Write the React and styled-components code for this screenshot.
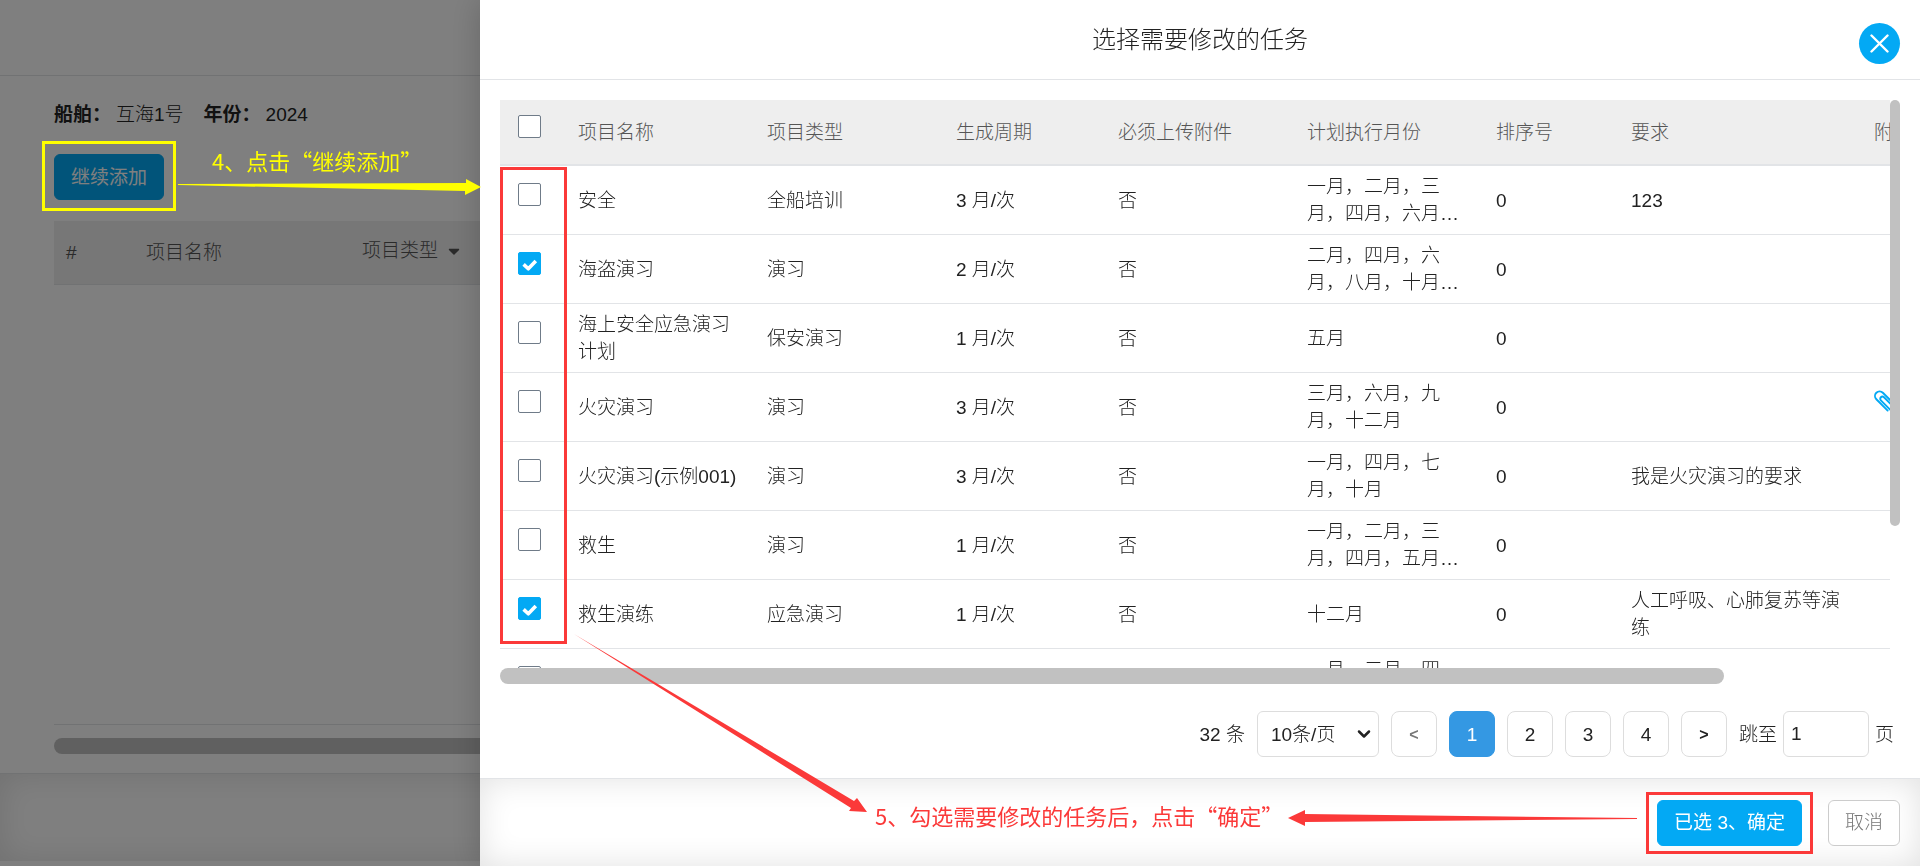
import React, { useState } from 'react';
import styled, { createGlobalStyle, ThemeProvider } from 'styled-components';
import { FaCaretDown } from 'react-icons/fa';
import { ChevronDown } from 'lucide-react';

const theme = {
    colors: {
        primary: '#03a9f4',
        active: '#3498e3',
        text: '#222',
        muted: '#555',
        line: '#e2e4e7',
        head: '#eee',
        bar: '#c1c1c1',
        red: '#fb3939',
        yellow: '#ff0',
    },
};

const GlobalStyle = createGlobalStyle`
    * {
        box-sizing: border-box;
    }
    body {
        margin: 0;
        overflow: hidden;
        background: #fff;
    }
    body, button, input, select {
        font-family: "Liberation Sans", "Noto Sans CJK SC", sans-serif;
        font-size: 19px;
        font-weight: 300;
        line-height: 27px;
        color: #222;
    }
`;

const Page = styled.main`
    display: flex;
    flex-direction: column;
    height: 100vh;
    padding-bottom: 5px;
`;

const TopBar = styled.header`
    flex: none;
    height: 76px;
    border-bottom: 1px solid ${props => props.theme.colors.line};
`;

const Content = styled.section`
    display: flex;
    flex: 1;
    flex-direction: column;
    align-items: flex-start;
    padding: 25px 0 19px 54px;
`;

const Info = styled.dl`
    display: flex;
    gap: 5px;
    margin: 0 0 25px 0;
    line-height: 28px;
`;

const InfoLabel = styled.dt`
    font-weight: 700;
`;

const InfoValue = styled.dd`
    margin: 0 15px 0 0;
`;

const Button = styled.button`
    height: 46px;
    padding: 0 16px;
    border: 1px solid ${props => (props.$primary ? props.theme.colors.primary : '#ccc')};
    border-radius: 6px;
    color: ${props => (props.$primary ? '#fff' : '#777')};
    background: ${props => (props.$primary ? props.theme.colors.primary : '#fff')};
    font-weight: ${props => (props.$primary ? 400 : 300)};
    cursor: pointer;
`;

const PlanTable = styled.table`
    width: 100%;
    margin-top: 21px;
    border-collapse: separate;
    border-spacing: 0;
    table-layout: fixed;
`;

const PlanHead = styled.th`
    width: ${props => props.$width};
    height: 64px;
    padding: 0 12px;
    border-bottom: 1px solid ${props => props.theme.colors.line};
    color: ${props => props.theme.colors.muted};
    background: ${props => props.theme.colors.head};
    font-weight: 300;
    text-align: left;
`;

const SortButton = styled.button`
    display: flex;
    align-items: center;
    gap: 7px;
    padding: 0 0 4px 0;
    border: 0;
    color: inherit;
    background: none;
`;

const PlanBody = styled.div`
    flex: 1;
    width: 100%;
    margin-bottom: 13px;
    border-bottom: 1px solid ${props => props.theme.colors.line};
`;

const ScrollX = styled.div`
    flex: none;
    width: ${props => props.$size};
    height: 16px;
    border-radius: 8px;
    background: ${props => props.theme.colors.bar};
`;

const ScrollY = styled.div`
    width: 10px;
    height: ${props => props.$size};
    border-radius: 5px;
    background: ${props => props.theme.colors.bar};
`;

const Footer = styled.footer`
    display: flex;
    flex: none;
    justify-content: flex-end;
    align-items: center;
    gap: 26px;
    height: 88px;
    padding: 0 20px;
    border-top: 1px solid ${props => props.theme.colors.line};
    box-shadow: inset 0 0 32px rgba(0, 0, 0, 0.12);
`;

const Mask = styled.div`
    position: fixed;
    inset: 0;
    background: rgba(0, 0, 0, 0.5);
`;

const Drawer = styled.section`
    position: fixed;
    top: 0;
    right: 0;
    bottom: 0;
    display: flex;
    flex-direction: column;
    width: 75%;
    background: #fff;
    box-shadow: 0 0 30px rgba(0, 0, 0, 0.2);
`;

const DrawerHeader = styled.header`
    display: grid;
    flex: none;
    grid-template-columns: 1fr auto 1fr;
    align-items: center;
    height: 80px;
    padding: 0 20px;
    border-bottom: 1px solid ${props => props.theme.colors.line};
`;

const DrawerTitle = styled.h1`
    grid-column: 2;
    margin: 0;
    font-size: 24px;
    font-weight: 300;
    line-height: 36px;
`;

const CloseButton = styled.button`
    display: flex;
    justify-content: center;
    align-items: center;
    justify-self: end;
    width: 41px;
    height: 41px;
    margin-top: 8px;
    padding: 0;
    border: 0;
    border-radius: 50%;
    background: ${props => props.theme.colors.primary};
    cursor: pointer;
`;

const DrawerBody = styled.div`
    display: flex;
    flex: 1;
    flex-direction: column;
    min-height: 0;
    padding: 20px 20px 21px 20px;
`;

const TableArea = styled.div`
    display: flex;
    flex: 1;
    min-height: 0;
`;

const TableViewport = styled.div`
    flex: 1;
    min-width: 0;
    overflow: auto;
    scrollbar-width: none;
`;

const TaskTable = styled.table`
    width: 1590px;
    border-collapse: separate;
    border-spacing: 0;
    table-layout: fixed;
`;

const HeadCell = styled.th`
    width: ${props => props.$width};
    height: 66px;
    padding: ${props => (props.$check ? '0 18px 11px 18px' : '0 12px')};
    border-bottom: 2px solid ${props => props.theme.colors.line};
    color: ${props => props.theme.colors.muted};
    background: ${props => props.theme.colors.head};
    font-weight: 300;
    text-align: left;
`;

const Cell = styled.td`
    height: 69px;
    padding: ${props => (props.$check ? '0 18px 11px 18px' : '0 12px')};
    border-bottom: 1px solid ${props => props.theme.colors.line};
`;

const Clamp = styled.div`
    display: -webkit-box;
    overflow: hidden;
    -webkit-box-orient: vertical;
    -webkit-line-clamp: 2;
`;

const CheckLabel = styled.label`
    display: grid;
    width: 23px;
    height: 23px;
    > * {
        grid-area: 1 / 1;
    }
    svg {
        pointer-events: none;
    }
`;

const CheckInput = styled.input`
    width: 23px;
    height: 23px;
    margin: 0;
    border: 1px solid #6f7b88;
    border-radius: 2px;
    background: #fff;
    appearance: none;
    &:checked {
        border-color: ${props => props.theme.colors.primary};
        background: ${props => props.theme.colors.primary};
    }
`;

const AttachLink = styled.a`
    display: block;
    height: 35px;
    color: ${props => props.theme.colors.primary};
`;

const Pagination = styled.nav`
    display: flex;
    justify-content: flex-end;
    align-items: center;
    gap: 12px;
    margin-top: 27px;
    padding-right: 6px;
`;

const SelectBox = styled.div`
    display: grid;
    align-items: center;
    > * {
        grid-area: 1 / 1;
    }
    svg {
        justify-self: end;
        margin-right: 5px;
        pointer-events: none;
    }
`;

const PageSize = styled.select`
    width: 122px;
    height: 46px;
    padding: 0 28px 0 13px;
    border: 1px solid #ddd;
    border-radius: 6px;
    background: #fff;
    appearance: none;
`;

const PageButton = styled.button`
    width: 46px;
    height: 46px;
    padding: 0;
    border: 1px solid ${props => (props.$active ? props.theme.colors.active : '#ddd')};
    border-radius: 8px;
    color: ${props => (props.$active ? '#fff' : props.theme.colors.text)};
    background: ${props => (props.$active ? props.theme.colors.active : '#fff')};
    cursor: pointer;
    &:disabled {
        color: #777;
    }
`;

const StepButton = styled(PageButton)`
    font-size: 16px;
    font-weight: 700;
`;

const Jump = styled.label`
    display: flex;
    align-items: center;
    gap: 6px;
`;

const JumpInput = styled.input`
    width: 86px;
    height: 46px;
    padding: 0 7px;
    border: 1px solid #ddd;
    border-radius: 6px;
`;

// guide marks drawn over the page
const Marks = styled.div`
    position: fixed;
    inset: 0;
    pointer-events: none;
`;

const MarkBox = styled.div`
    position: absolute;
    top: ${props => props.$top}px;
    left: ${props => props.$left}px;
    width: ${props => props.$width}px;
    height: ${props => props.$height}px;
    border: 3px solid ${props => props.theme.colors[props.$color]};
`;

const MarkText = styled.p`
    position: absolute;
    top: ${props => props.$top}px;
    left: ${props => props.$left}px;
    margin: 0;
    color: ${props => props.theme.colors[props.$color]};
    font-family: "Noto Sans CJK SC", sans-serif;
    font-size: 22px;
    font-weight: 400;
    line-height: 32px;
    white-space: nowrap;
`;

const Arrows = styled.svg`
    position: absolute;
    top: 0;
    left: 0;
`;

const columns = [
    { title: '项目名称', width: '189px' },
    { title: '项目类型', width: '189px' },
    { title: '生成周期', width: '162px' },
    { title: '必须上传附件', width: '189px' },
    { title: '计划执行月份', width: '189px' },
    { title: '排序号', width: '135px' },
    { title: '要求', width: '243px' },
    { title: '附件', width: 'auto' },
];

const tasks = [
    { id: 1, name: '安全', type: '全船培训', cycle: '3 月/次', months: '一月，二月，三月，四月，六月，七月，九月', need: '123' },
    { id: 2, name: '海盗演习', type: '演习', cycle: '2 月/次', months: '二月，四月，六月，八月，十月，十二月', need: '' },
    { id: 3, name: '海上安全应急演习计划', type: '保安演习', cycle: '1 月/次', months: '五月', need: '' },
    { id: 4, name: '火灾演习', type: '演习', cycle: '3 月/次', months: '三月，六月，九月，十二月', need: '', file: true },
    { id: 5, name: '火灾演习(示例001)', type: '演习', cycle: '3 月/次', months: '一月，四月，七月，十月', need: '我是火灾演习的要求' },
    { id: 6, name: '救生', type: '演习', cycle: '1 月/次', months: '一月，二月，三月，四月，五月，六月，七月', need: '' },
    { id: 7, name: '救生演练', type: '应急演习', cycle: '1 月/次', months: '十二月', need: '人工呼吸、心肺复苏等演练' },
    { id: 8, name: '弃船演习', type: '演习', cycle: '1 月/次', months: '一月，二月，四月，五月', need: '' },
];

const Checkbox = ({ label, checked, onChange }) => (
    <CheckLabel>
        <CheckInput type="checkbox" aria-label={label} checked={checked} onChange={onChange} />
        {checked && (
            <svg width="23" height="23" viewBox="0 0 23 23" fill="none" stroke="#fff" strokeWidth="3.6" strokeLinejoin="round">
                <path d="M5.6 12.4l4.7 4.4 7.5-7.7" />
            </svg>
        )}
    </CheckLabel>
);

const ClipIcon = () => (
    <svg width="24" height="24" viewBox="0 0 24 24" fill="none" stroke="currentColor" strokeWidth="1.9" strokeLinecap="round">
        <g transform="translate(5.6 6) rotate(45)">
            <path d="M16 4.6H0a4.6 4.6 0 0 1 0-9.2h17a3.4 3.4 0 0 1 0 6.8H4a2.2 2.2 0 0 1 0-4.4h11" />
        </g>
    </svg>
);

const App = () => {
    const [selected, setSelected] = useState([2, 7]);
    const [page, setPage] = useState(1);

    const toggle = id => {
        setSelected(selected.includes(id) ? selected.filter(item => item !== id) : [...selected, id]);
    };

    return (
        <ThemeProvider theme={theme}>
            <GlobalStyle />
            <Page lang="zh-CN">
                <TopBar />
                <Content>
                    <Info>
                        <InfoLabel>船舶：</InfoLabel>
                        <InfoValue>互海1号</InfoValue>
                        <InfoLabel>年份：</InfoLabel>
                        <InfoValue>2024</InfoValue>
                    </Info>
                    <Button $primary>继续添加</Button>
                    <PlanTable>
                        <thead>
                            <tr>
                                <PlanHead $width="80px">#</PlanHead>
                                <PlanHead $width="216px">项目名称</PlanHead>
                                <PlanHead>
                                    <SortButton>项目类型 <FaCaretDown size={18} /></SortButton>
                                </PlanHead>
                            </tr>
                        </thead>
                    </PlanTable>
                    <PlanBody />
                    <ScrollX $size="100%" />
                </Content>
                <Footer />
            </Page>
            <Mask />
            <Drawer lang="zh-CN">
                <DrawerHeader>
                    <DrawerTitle>选择需要修改的任务</DrawerTitle>
                    <CloseButton aria-label="关闭">
                        <svg width="19" height="19" viewBox="0 0 19 19" stroke="#fff" strokeWidth="2.4" strokeLinecap="round">
                            <path d="M1.5 1.5l16 16M17.5 1.5l-16 16" />
                        </svg>
                    </CloseButton>
                </DrawerHeader>
                <DrawerBody>
                    <TableArea>
                        <TableViewport>
                            <TaskTable>
                                <thead>
                                    <tr>
                                        <HeadCell $check $width="66px">
                                            <Checkbox label="全选" checked={false} onChange={() => setSelected(tasks.map(task => task.id))} />
                                        </HeadCell>
                                        {columns.map(column => (
                                            <HeadCell key={column.title} $width={column.width}>{column.title}</HeadCell>
                                        ))}
                                    </tr>
                                </thead>
                                <tbody>
                                    {tasks.map(task => (
                                        <tr key={task.id}>
                                            <Cell $check>
                                                <Checkbox label={task.name} checked={selected.includes(task.id)} onChange={() => toggle(task.id)} />
                                            </Cell>
                                            <Cell><Clamp>{task.name}</Clamp></Cell>
                                            <Cell>{task.type}</Cell>
                                            <Cell>{task.cycle}</Cell>
                                            <Cell>否</Cell>
                                            <Cell><Clamp>{task.months}</Clamp></Cell>
                                            <Cell>0</Cell>
                                            <Cell><Clamp>{task.need}</Clamp></Cell>
                                            <Cell>{task.file && <AttachLink href="#file" aria-label="附件"><ClipIcon /></AttachLink>}</Cell>
                                        </tr>
                                    ))}
                                </tbody>
                            </TaskTable>
                        </TableViewport>
                        <ScrollY $size="75%" />
                    </TableArea>
                    <ScrollX $size="87.4%" />
                    <Pagination>
                        <span>32 条</span>
                        <SelectBox>
                            <PageSize aria-label="每页条数">
                                <option>10条/页</option>
                            </PageSize>
                            <ChevronDown size={20} strokeWidth={3} />
                        </SelectBox>
                        <StepButton disabled={page === 1} onClick={() => setPage(page - 1)}>&lt;</StepButton>
                        {[1, 2, 3, 4].map(number => (
                            <PageButton key={number} $active={number === page} onClick={() => setPage(number)}>{number}</PageButton>
                        ))}
                        <StepButton disabled={page === 4} onClick={() => setPage(page + 1)}>&gt;</StepButton>
                        <Jump>
                            跳至
                            <JumpInput type="text" defaultValue="1" />
                            页
                        </Jump>
                    </Pagination>
                </DrawerBody>
                <Footer>
                    <Button $primary>已选 {selected.length + 1}、确定</Button>
                    <Button>取消</Button>
                </Footer>
            </Drawer>
            <Marks lang="zh-CN">
                <MarkBox $color="yellow" $top={141} $left={42} $width={134} $height={70} />
                <MarkBox $color="red" $top={167} $left={500} $width={67} $height={477} />
                <MarkBox $color="red" $top={792} $left={1646} $width={167} $height={62} />
                <MarkText $color="yellow" $top={144} $left={212}>4、点击“继续添加”</MarkText>
                <MarkText $color="red" $top={799} $left={875}>5、勾选需要修改的任务后，点击“确定”</MarkText>
                <Arrows width="1920" height="866">
                    <path fill={theme.colors.yellow} d="M178 184L466 183V179L481 187L465 195V191L178 185Z" />
                    <path fill={theme.colors.red} d="M574 634L854 801L857 798L867 812L849 811L851 808Z" />
                    <path fill={theme.colors.red} d="M1637 818L1305 814V810L1288 818L1305 826V822L1637 819Z" />
                </Arrows>
            </Marks>
        </ThemeProvider>
    );
};

export default App;
